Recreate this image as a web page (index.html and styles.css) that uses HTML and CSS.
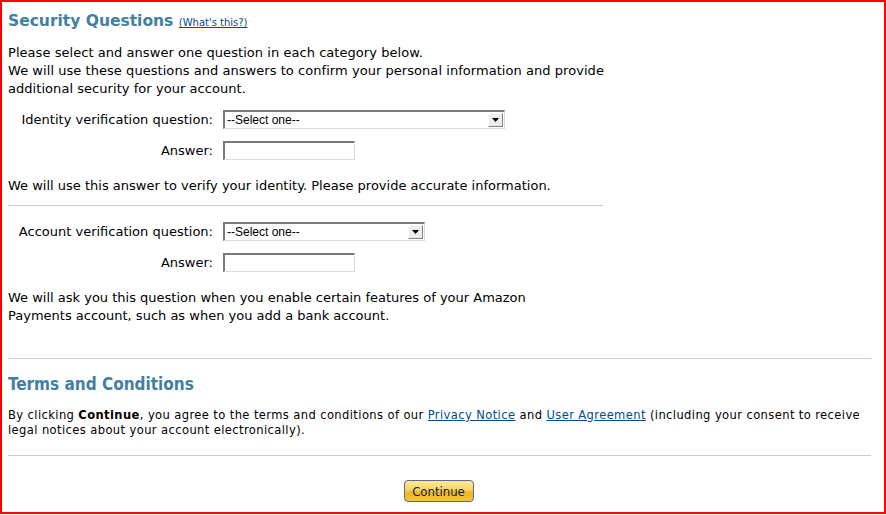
FILE: index.html
```html
<!DOCTYPE html>
<html>
<head>
<meta charset="utf-8">
<link rel="stylesheet" href="styles.css">
</head>
<body>
<div class="frame">
  <div class="security">
    <h1 class="title">Security Questions <a class="whats" href="#">(What's this?)</a></h1>
    <p class="intro">Please select and answer one question in each category below.<br>We will use these questions and answers to confirm your personal information and provide<br>additional security for your account.</p>

    <div class="qgrid">
      <div class="lbl">Identity verification question:</div>
      <div class="select wide"><span class="sel-text">--Select one--</span><span class="arrow"><svg width="7" height="4" viewBox="0 0 7 4"><path d="M0 0H7L3.5 4Z" fill="#000"/></svg></span></div>
      <div class="lbl">Answer:</div>
      <div class="field"></div>
    </div>
    <p class="note">We will use this answer to verify your identity. Please provide accurate information.</p>
    <div class="rule short"></div>

    <div class="qgrid second">
      <div class="lbl">Account verification question:</div>
      <div class="select narrow"><span class="sel-text">--Select one--</span><span class="arrow"><svg width="7" height="4" viewBox="0 0 7 4"><path d="M0 0H7L3.5 4Z" fill="#000"/></svg></span></div>
      <div class="lbl">Answer:</div>
      <div class="field"></div>
    </div>
    <p class="note second">We will ask you this question when you enable certain features of your Amazon<br>Payments account, such as when you add a bank account.</p>
  </div>

  <div class="rule long r1"></div>
  <h2 class="terms-title">Terms and Conditions</h2>
  <p class="terms">By clicking <b>Continue</b>, you agree to the terms and conditions of our <a href="#">Privacy Notice</a> and <a href="#">User Agreement</a> (including your consent to receive legal notices about your account electronically).</p>
  <div class="rule long r2"></div>
  <div class="actions"><button class="continue">Continue</button></div>
</div>
</body>
</html>
```

FILE: styles.css
```css
html, body {
  margin: 0;
  padding: 0;
  background: #fff;
}
.frame {
  box-sizing: border-box;
  width: 886px;
  height: 514px;
  border: 2px solid #ff0000;
  padding: 0 14px 0 6px;
  font-family: "DejaVu Sans", Verdana, sans-serif;
  font-size: 13px;
  color: #000;
}
.title {
  margin: 8px 0 0;
  font-size: 15.5px;
  font-weight: bold;
  color: #41809f;
  line-height: 22px;
}
.whats {
  font-size: 10px;
  font-weight: normal;
  color: #004b91;
}
.intro {
  margin: 10px 0 0;
  line-height: 18px;
  letter-spacing: 0.05px;
}
.qgrid {
  display: grid;
  grid-template-columns: 205px auto;
  justify-content: start;
  align-items: center;
  column-gap: 10px;
  row-gap: 12px;
  margin-top: 12px;
}
.qgrid.second { margin-top: 16px; }
.lbl {
  text-align: right;
  line-height: 19px;
}
.select {
  box-sizing: border-box;
  height: 19px;
  display: flex;
  align-items: center;
  justify-content: space-between;
  border-top: 2px solid #7a7a7a;
  border-left: 2px solid #7a7a7a;
  border-right: 1px solid #dcdcdc;
  border-bottom: 1px solid #dcdcdc;
  background: #fff;
  font-family: "Liberation Sans", Arial, sans-serif;
  font-size: 12px;
}
.select.wide { width: 282px; }
.select.narrow { width: 202px; }
.sel-text { padding-left: 2px; }
.arrow {
  width: 15px;
  height: 14px;
  margin-right: 1px;
  box-sizing: border-box;
  background: #ececec;
  border-top: 1px solid #fff;
  border-left: 1px solid #fff;
  border-right: 1px solid #808080;
  border-bottom: 1px solid #808080;
  display: flex;
  align-items: center;
  justify-content: center;
}
.field {
  box-sizing: border-box;
  width: 132px;
  height: 19px;
  border-top: 2px solid #7a7a7a;
  border-left: 2px solid #7a7a7a;
  border-right: 1px solid #dcdcdc;
  border-bottom: 1px solid #dcdcdc;
}
.note {
  margin: 17px 0 0;
  line-height: 18px;
}
.note.second { margin-top: 17px; }
.rule {
  height: 1px;
  background: #cccccc;
}
.rule.short { width: 595px; margin-top: 10px; }
.rule.long { width: 863px; }
.r1 { margin-top: 33px; }
.terms-title {
  margin: 14px 0 0;
  font-family: "DejaVu Sans Condensed", "DejaVu Sans", sans-serif;
  font-size: 17px;
  font-weight: bold;
  color: #41809f;
  line-height: 22px;
}
.terms {
  margin: 12px 0 0;
  font-family: "DejaVu Sans Condensed", "DejaVu Sans", sans-serif;
  font-size: 12.8px;
  letter-spacing: 0.4px;
  line-height: 15px;
}
.terms a { color: #004b91; }
.r2 { margin-top: 18px; }
.actions {
  display: flex;
  justify-content: center;
  margin-top: 24px;
  width: 861px;
}
.continue {
  box-sizing: border-box;
  width: 70px;
  height: 22px;
  border: 1px solid #5f6a8a;
  border-radius: 4px;
  background: linear-gradient(#fde89a 0%, #f9d462 45%, #f0b520 55%, #f3c53c 100%);
  font-family: "DejaVu Sans Condensed", "DejaVu Sans", sans-serif;
  font-size: 13px;
  color: #0b1a4a;
  padding: 0;
}
```
